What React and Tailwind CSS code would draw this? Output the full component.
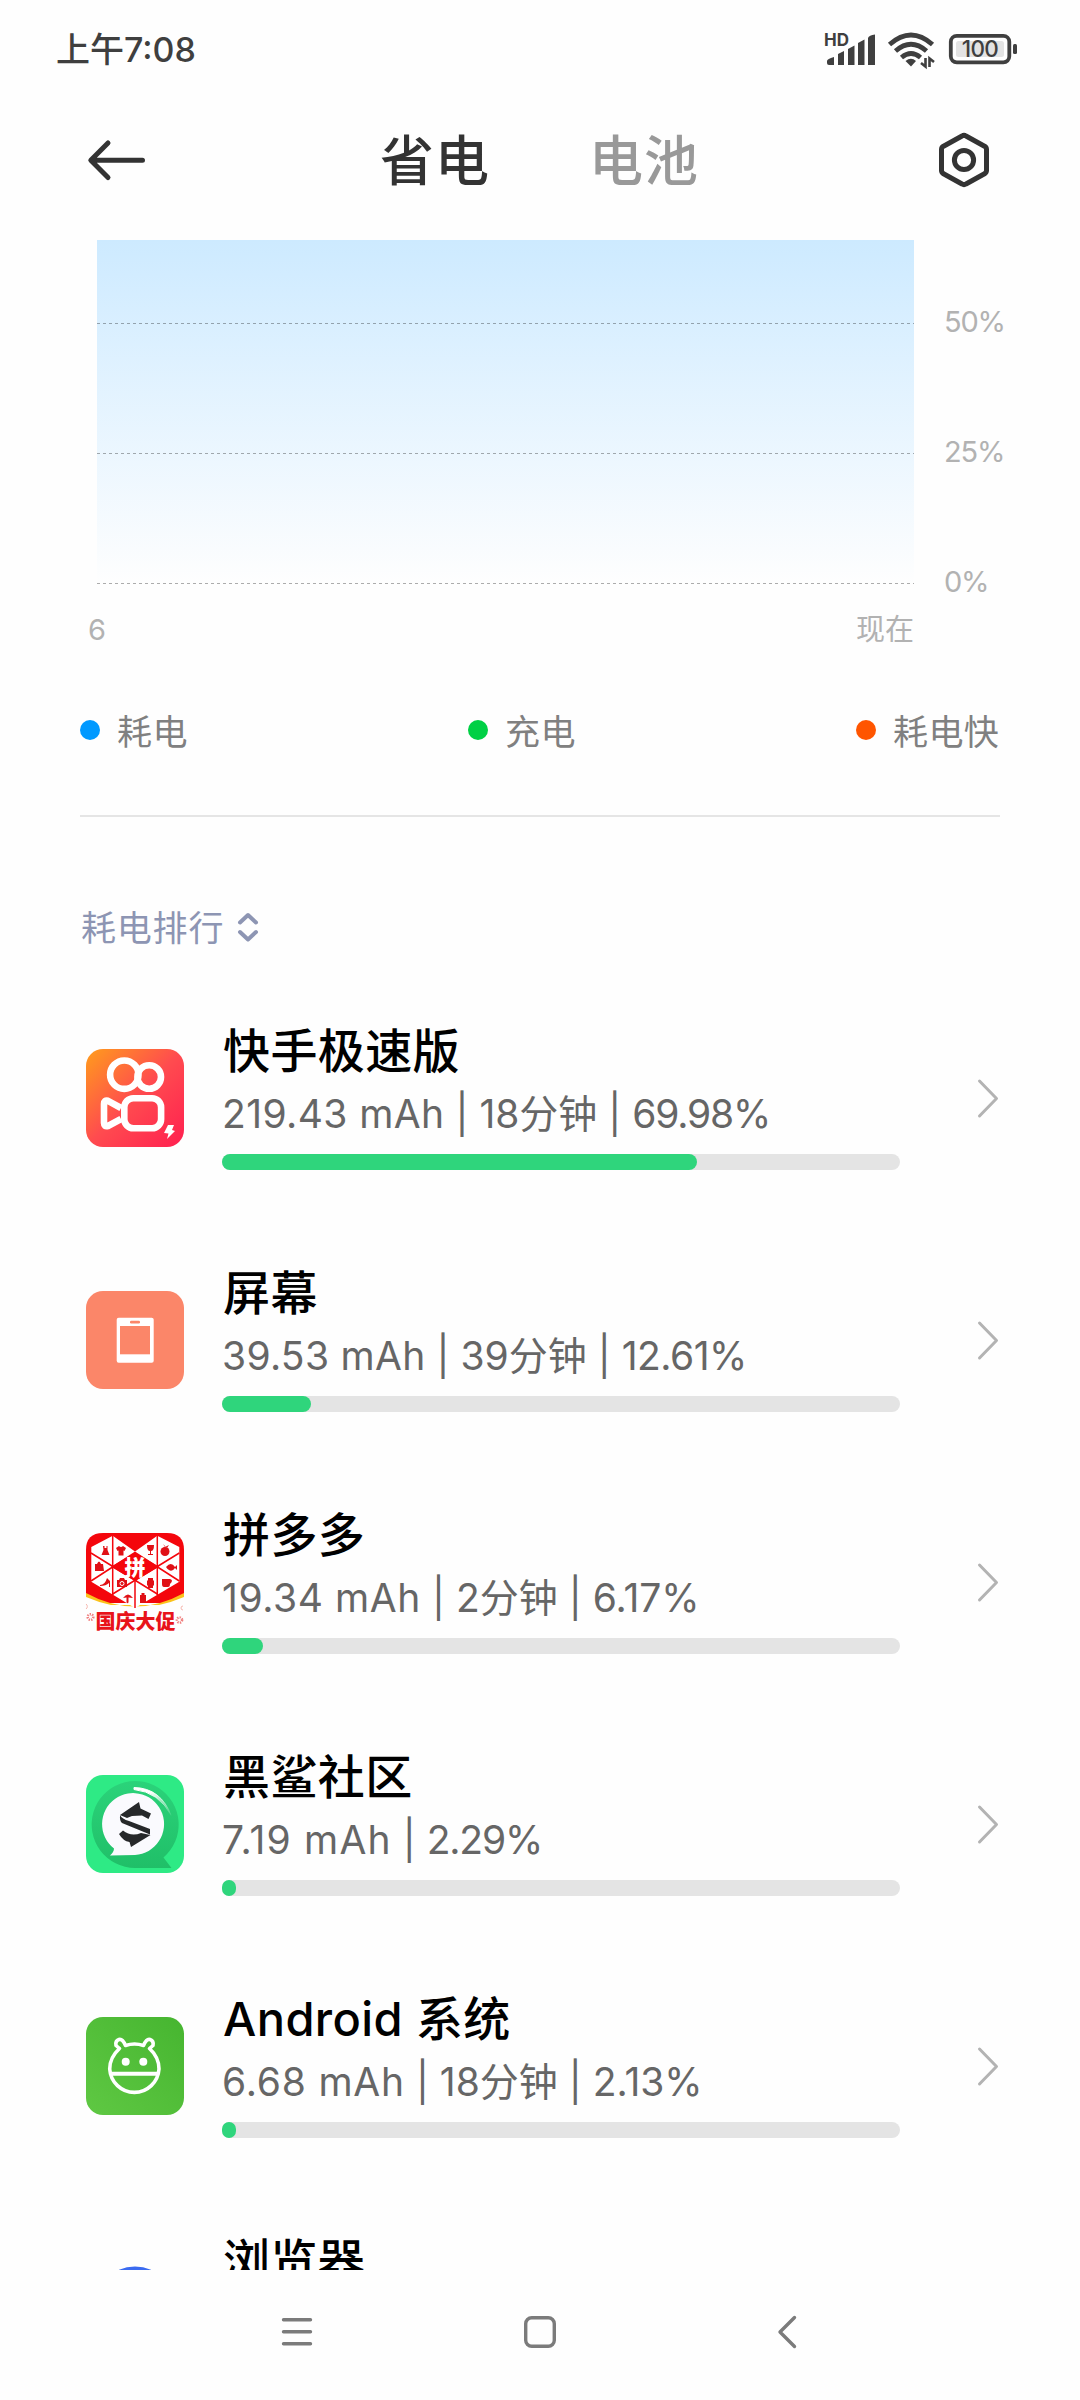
/** Rows of the power usage ranking, fill is the width of the green bar in px */
const apps = [
    { name: "快手极速版", charge: "219.43 mAh", time: "18分钟", percent: "69.98%", chargeTracking: "tracking-[0.4px]", percentTracking: "tracking-[-1.2px]", fill: 475, Icon: KuaishouIcon },
    { name: "屏幕", charge: "39.53 mAh", time: "39分钟", percent: "12.61%", chargeTracking: "tracking-[0.3px]", percentTracking: "tracking-[-0.5px]", fill: 89, Icon: ScreenIcon },
    { name: "拼多多", charge: "19.34 mAh", time: "2分钟", percent: "6.17%", percentTracking: "tracking-normal", fill: 41, Icon: PinduoduoIcon },
    { name: "黑鲨社区", charge: "7.19 mAh", percent: "2.29%", chargeTracking: "tracking-[1.2px]", percentTracking: "tracking-[-1.2px]", fill: 14, Icon: SharkIcon },
    { name: "Android 系统", charge: "6.68 mAh", time: "18分钟", percent: "2.13%", chargeTracking: "tracking-[0.8px]", percentTracking: "tracking-normal", fill: 14, Icon: AndroidIcon },
    { name: "浏览器", Icon: BrowserIcon },
];

const legend = [
    { label: "耗电", dot: "bg-[#0099ff]" },
    { label: "充电", dot: "bg-[#00d045]" },
    { label: "耗电快", dot: "bg-[#ff5500]" },
];

function KuaishouIcon() {
    return (
        <svg viewBox="0 0 98 98" className="size-[98px] rounded-[17px]">
            <defs>
                <linearGradient id="ks" x1="0" y1="0" x2="1" y2="1">
                    <stop offset="0" stopColor="#ff9d1c" />
                    <stop offset="0.5" stopColor="#ff4b4f" />
                    <stop offset="1" stopColor="#ff1f50" />
                </linearGradient>
            </defs>
            <rect width="98" height="98" fill="url(#ks)" />
            <g fill="none" stroke="#fff" strokeWidth="6.6" strokeLinejoin="round">
                <circle cx="38.3" cy="25.7" r="14.2" />
                <circle cx="63.2" cy="28" r="11.8" />
                <rect x="38.3" y="49.3" width="36.8" height="30" rx="9" />
                <path d="M35 59 L22 51.8 Q18 51 18 55 V74 Q18 78 22 77 L35 70" />
            </g>
            <path d="M82 76 L88 76 L86 81 L89 82 L81 90 L82.5 84.5 L78 84 Z" fill="#fff" />
        </svg>
    );
}

function ScreenIcon() {
    return (
        <svg viewBox="0 0 98 98" className="size-[98px] rounded-[17px]">
            <rect width="98" height="98" fill="#fb8669" />
            <rect x="30.7" y="26.7" width="37" height="45" rx="2" fill="#fff" />
            <rect x="34" y="35" width="30" height="28.3" fill="#fb8669" />
            <rect x="44" y="29.8" width="10" height="2.6" rx="1.2" fill="#fb8669" />
        </svg>
    );
}

function PinduoduoIcon() {
    return (
        <svg viewBox="0 0 98 98" className="size-[98px] overflow-visible">
            <path d="M0 70 V17 Q0 0 17 0 H81 Q98 0 98 17 V70 Z" fill="#f4060c" />
            <path d="M0 60 Q49 87 98 60 V72 H0 Z" fill="#fbc21c" />
            <path d="M0 64 Q49 85 98 64 V98 H0 Z" fill="#fefefe" />
            <path d="M5.3 14 L26.7 2.7 L49 18.5 L71.3 2.7 L93.3 14 V48.7 L49 75 L5.3 48.7 Z" fill="#fff" />
            <path d="M25 33.7 L49 19.5 L73 33.7 L49 48 Z" fill="#f4060c" />
            <g stroke="#f4060c" strokeWidth="1.5" fill="none">
                <path d="M26.7 2 V62 M71.3 2 V62 M49 46 V75" />
                <path d="M5 20 L71.3 61 M93.3 20 L26.7 61" />
                <path d="M5 48 L49 19.5 L93.3 48" />
            </g>
            <g fill="#e01016">
                <path d="M17 13 h1.5 v2 h2 v-2 h1 v4 l2 5 h-8 l2-5 z" />
                <path d="M30 15 l3-2 q2 2 4 0 l3 2 l-1.5 3 l-1-.5 v5 h-5 v-5 l-1 .5 z" />
                <path d="M61 12 h7 q0 6-3 6 v3 h2 v1 h-5 v-1 h2 v-3 q-3 0-3-6 z" />
                <circle cx="79" cy="18.5" r="4.5" />
                <path d="M77 11 l2 3 l4-2 l-2 3 z" />
                <path d="M9 31 h2 q2-5 4 0 h2 l1 7 h-9 z" />
                <path d="M80 34 q5-6 9 0 l2-2 v5 l-2-2 q-4 6-9-1 z" />
                <path d="M14 52 q5 0 7-7 l3 3 v6 h-1 v-4 q-3 3-9 3 z" />
                <path d="M31 47 h2 l1-2 h4 l1 2 h2 v7 h-10 z" />
                <path d="M62 45 h5 v2 l1 1 v4 l-1 1 v2 h-5 v-2 l-1-1 v-4 l1-1 z" />
                <path d="M76 46 h8 q4 1 0 5 q0 3-2 3 h-4 q-2 0-2-3 z" />
                <path d="M37 65 q5-7 10 0 l-4.5 -.5 v5 q-2 2-2 -1 v-4 z" />
                <path d="M54 62 h1.5 v-2 h3 v2 h1.5 v8 h-6 z" />
            </g>
            <circle cx="36" cy="50.5" r="2" fill="none" stroke="#fff" strokeWidth="1" />
            <text x="49" y="41.5" textAnchor="middle" fontSize="21" fontWeight="900" fill="#fff">拼</text>
            <text x="49.5" y="96" textAnchor="middle" fontSize="20" fontWeight="900" fill="#e8141a">国庆大促</text>
            <g fill="none" stroke="#f08080" strokeWidth="2.5" strokeDasharray="1.3 1.1">
                <circle cx="4.5" cy="84" r="2.8" />
                <circle cx="93.5" cy="87" r="2.6" />
            </g>
            <path d="M0 71 a3 3 0 0 1 0 5 M97 73 a2 2 0 1 0 0 4" fill="none" stroke="#f6b8b0" />
        </svg>
    );
}

function SharkIcon() {
    return (
        <svg viewBox="0 0 98 98" className="size-[98px] rounded-[17px]">
            <defs>
                <linearGradient id="sharkRing" x1="0" y1="0" x2="0" y2="1">
                    <stop offset="0" stopColor="#2bd37a" />
                    <stop offset="1" stopColor="#20bf68" />
                </linearGradient>
                <linearGradient id="sharkArc" x1="0" y1="0" x2="1" y2="1">
                    <stop offset="0.3" stopColor="#fff" />
                    <stop offset="1" stopColor="#fff" stopOpacity="0" />
                </linearGradient>
            </defs>
            <rect width="98" height="98" fill="#2eea85" />
            <path d="M49 93 A43.5 43.5 0 1 1 77.5 82.5 L85.5 93 Z" fill="url(#sharkRing)" />
            <path d="M48 12.5 Q75 13 85.5 41 Q73 17 48 14.5 Z" fill="url(#sharkArc)" stroke="url(#sharkArc)" />
            <path d="M28 73.5 A31 31 0 1 1 49 80 L24 80.5 Q28 77 28 73.5 Z" fill="#fafafe" />
            <g fill="#26282a">
                <path d="M34 40 L53 27 L54.5 33.5 L65 38.5 L62.5 44 L56 40.5 L46 41 L41 43 Z" />
                <path d="M34 40 Q36 44 43 46 L64 54 V59.5 L36 48 Q33.5 46 34 40 Z" />
                <path d="M33 59 L37 55.5 Q45 62 55 58 L64.5 60 L45 72 L43.5 67 Q37 66 33 59 Z" />
            </g>
        </svg>
    );
}

function AndroidIcon() {
    return (
        <svg viewBox="0 0 98 98" className="size-[98px] rounded-[17px]">
            <defs>
                <linearGradient id="android" x1="0" y1="1" x2="1" y2="0">
                    <stop offset="0" stopColor="#5fc843" />
                    <stop offset="1" stopColor="#46b530" />
                </linearGradient>
            </defs>
            <rect width="98" height="98" fill="url(#android)" />
            <g fill="none" stroke="#fff" strokeWidth="3.6" strokeLinejoin="round">
                <path d="M33.5 31.5 L30 28.5 Q29 24 33 22.5 Q36.5 21.5 39.5 28.5 Q48.5 25.5 57.5 28.5 Q60.5 21.5 64 22.5 Q68 24 67 28.5 L63.5 31.5 C69.5 37 73 43.5 73 52 A24.7 25 0 0 1 23.7 52 C23.7 43.5 27.5 37 33.5 31.5 Z" />
                <path d="M24.5 56.7 H72.5" strokeWidth="4" />
            </g>
            <circle cx="39.7" cy="44.7" r="4" fill="#fff" />
            <circle cx="57.3" cy="44.7" r="4" fill="#fff" />
        </svg>
    );
}

function BrowserIcon() {
    return (
        <svg viewBox="0 0 98 98" className="size-[98px]">
            <circle cx="49" cy="49" r="41.5" fill="#3b6bf0" />
        </svg>
    );
}

function StatusBar() {
    return (
        <div className="flex h-[100px] shrink-0 items-center justify-between pl-[56px] pr-[63px] text-[#3f3f3f]">
            <span className="text-[34px] leading-[40px] font-medium">上午7:08</span>
            <svg width="194" height="40" viewBox="823 30 194 40" fill="#3f3f3f">
                <text x="824" y="45.5" fontSize="17" fontWeight="700">HD</text>
                <path d="M827 63 V61 Q827 59 834 57 V65 H829 Q827 65 827 63 Z" />
                <path d="M838 65 V54 L844 51 V65 Z" />
                <path d="M848 65 V49 L854.5 45.5 V65 Z" />
                <path d="M858 65 V43 L864.5 39.5 V65 Z" />
                <path d="M868 65 V38 Q869 35 875 34.5 V65 Z" />
                <g fill="none" stroke="#3f3f3f" strokeWidth="4.8">
                    <path d="M889.5 44.5 Q911 25.5 932.5 44.5" />
                    <path d="M895.5 51 Q911 37.5 926.5 51" />
                    <path d="M901.5 57.5 Q911 49.5 920.5 57.5" />
                </g>
                <path d="M905.5 61 Q911 56.5 916 61 L911 66.5 Z" />
                <path d="M925.5 58 V66.5 L921 63 M929.5 67 V58.5 L934 62" fill="none" stroke="#3f3f3f" strokeWidth="2.6" />
                <rect x="950.8" y="35.8" width="58.5" height="26.5" rx="6" fill="none" stroke="#3f3f3f" strokeWidth="3.8" />
                <rect x="956" y="41" width="48" height="16" rx="2.5" fill="#e3e3e3" />
                <rect x="1013" y="44" width="4" height="10" rx="1.5" />
                <text x="980" y="57.3" textAnchor="middle" fontSize="22.5" fontWeight="500" letterSpacing="-0.6">100</text>
            </svg>
        </div>
    );
}

function Header() {
    return (
        <div className="mb-[20px] flex h-[120px] shrink-0 items-center pl-[86px] pr-[89px] text-[54px] leading-[80px] font-medium tracking-[1px]">
            <svg width="60" height="44" viewBox="0 0 60 44" fill="none" stroke="#333" strokeWidth="5" strokeLinecap="round" strokeLinejoin="round">
                <path d="M56.5 22.3 H5 M22 5 L4.8 22.3 L22 39.5" />
            </svg>
            <span className="ml-[234px] pt-[4px] text-[#333]">省电</span>
            <span className="ml-[99px] pt-[4px] text-[#999]">电池</span>
            <svg className="ml-auto" width="54" height="58" viewBox="-27 -29 54 58" fill="none" stroke="#333" strokeWidth="5" strokeLinejoin="round">
                <path d="M-2 -24 Q0 -25.3 2 -24 L20.5 -13.8 Q22.5 -12.5 22.5 -10.5 V10.5 Q22.5 12.5 20.5 13.8 L2 24 Q0 25.3 -2 24 L-20.5 13.8 Q-22.5 12.5 -22.5 10.5 V-10.5 Q-22.5 -12.5 -20.5 -13.8 Z" />
                <circle r="9.6" />
            </svg>
        </div>
    );
}

function DashedLine() {
    return <div className="h-px bg-[repeating-linear-gradient(90deg,rgba(0,0,0,0.32)_0_3px,transparent_3px_6px)]" />;
}

function BatteryChart() {
    return (
        <div className="flex h-[434px] shrink-0 pl-[97px] text-[#b2b2b2]">
            <div className="w-[817px]">
                <div className="bg-linear-to-b from-[#cdeaff] to-[#fefefe]">
                    <div className="h-[83px]" />
                    <DashedLine />
                    <div className="h-[129px]" />
                    <DashedLine />
                    <div className="h-[129px]" />
                    <DashedLine />
                </div>
                <div className="-ml-[9px] flex justify-between text-[29px] leading-[92px]">
                    <span>6</span>
                    <span>现在</span>
                </div>
            </div>
            <div className="flex flex-col pt-[17px] pl-[30px] text-[29px] leading-[130px] tracking-[-1.2px]">
                <span>50%</span>
                <span>25%</span>
                <span>0%</span>
            </div>
        </div>
    );
}

/** Charge, running time and share of one app, divided by pipes */
function AppDetail({ charge, time, percent, chargeTracking = "tracking-[0.6px]", percentTracking }) {
    return (
        <div className="mt-[7px] text-[39px] leading-[48px] text-[#666]">
            <span className={chargeTracking}>{charge}</span>
            <span> | </span>
            {time && (
                <>
                    <span>{time}</span>
                    <span> | </span>
                </>
            )}
            <span className={percentTracking}>{percent}</span>
        </div>
    );
}

function AppRow({ name, fill, Icon, ...detail }) {
    return (
        <div className="flex h-[242px] shrink-0 pl-[86px] pr-[80px]">
            <div className="flex w-[136px] items-center">
                <Icon />
            </div>
            <div className="w-[678px] pt-[42px] whitespace-nowrap">
                <div className="pl-px text-[47px] leading-[64px] font-medium tracking-[0.4px] text-black">{name}</div>
                {detail.charge && (
                    <>
                        <AppDetail {...detail} />
                        <div className="mt-[16px] h-[16px] rounded-full bg-[#e4e4e4]">
                            <div className="h-full rounded-full bg-[#2fd57c]" style={{ width: fill }} />
                        </div>
                    </>
                )}
            </div>
            <svg className="ml-auto self-center" width="24" height="42" viewBox="0 0 24 42" fill="none" stroke="#b3b3b3" strokeWidth="3" strokeLinecap="round" strokeLinejoin="round">
                <path d="M3.5 4 L20.5 21.5 L3.5 39" />
            </svg>
        </div>
    );
}

function NavBar() {
    return (
        <div className="flex h-[124px] shrink-0 items-center pl-[280px]">
            <svg width="520" height="40" viewBox="280 2312 520 40" fill="none" stroke="#7b7b7b" strokeWidth="3.4" strokeLinecap="round" strokeLinejoin="round">
                <path d="M283.5 2319.7 H310.5 M283.5 2331.7 H310.5 M283.5 2343.7 H310.5" />
                <rect x="525.7" y="2317.7" width="28.6" height="28.6" rx="6" />
                <path d="M794.5 2317.5 L780 2332 L794.5 2346.5" />
            </svg>
        </div>
    );
}

function App() {
    return (
        <div
            lang="zh-CN"
            className="flex h-[2400px] w-[1080px] flex-col overflow-hidden bg-[#fefefe] font-['Inter','Noto_Sans_CJK_SC',sans-serif]"
        >
            <StatusBar />
            <Header />
            <main className="flex h-[2030px] shrink-0 flex-col overflow-hidden">
                <BatteryChart />

                {/* Legend under the chart */}
                <div className="grid h-[112px] shrink-0 grid-cols-[388px_388px_1fr] items-center pl-[80px] text-[35px] leading-[50px] tracking-[0.4px] text-[#808080]">
                    {legend.map(({ label, dot }) => (
                        <div key={label} className="flex items-center gap-[17px]">
                            <div className={`size-[20px] rounded-full ${dot}`} />
                            <span className="-mb-px pt-[3px]">{label}</span>
                        </div>
                    ))}
                </div>
                <div className="mx-[80px] mt-[29px] h-[2px] shrink-0 bg-[#e5e5e5]" />

                {/* Sort switch */}
                <div className="mt-[60px] flex h-[100px] shrink-0 items-center gap-[12px] pl-[81px] text-[35px] leading-[50px] tracking-[0.8px] text-[#8d95b3]">
                    <span className="pt-[2px]">耗电排行</span>
                    <svg width="24" height="32" viewBox="0 0 24 32" fill="none" stroke="#8d95b3" strokeWidth="4" strokeLinecap="round" strokeLinejoin="round">
                        <path d="M4 11.5 L12 4 L20 11.5 M4 21 L12 28.5 L20 21" />
                    </svg>
                </div>

                {apps.map((app) => (
                    <AppRow key={app.name} {...app} />
                ))}
            </main>
            <NavBar />
        </div>
    );
}

export default App;
